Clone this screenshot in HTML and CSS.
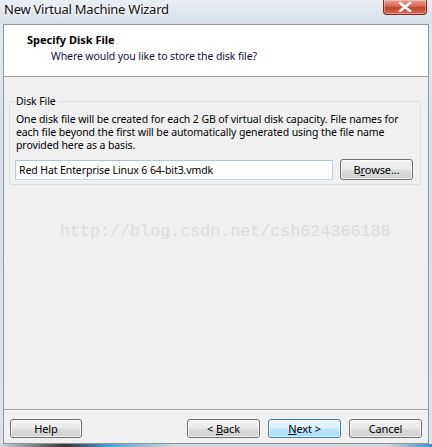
FILE: index.html
```html
<!DOCTYPE html>
<html>
<head>
<meta charset="utf-8">
<link rel="stylesheet" href="styles.css">
</head>
<body>
<div class="window">
  <div class="titlebar">
    <span class="title">New Virtual Machine Wizard</span>
    <div class="close">
      <svg width="14" height="10" viewBox="0 0 14 10"><path d="M2 1 L12 9 M12 1 L2 9" stroke="#fff" stroke-width="2.6" stroke-linecap="square"/></svg>
    </div>
  </div>
  <div class="frame">
    <div class="client">
      <div class="header">
        <div class="h-title">Specify Disk File</div>
        <div class="h-sub">Where would you like to store the disk file?</div>
      </div>
      <div class="body">
        <fieldset class="group">
          <legend>Disk File</legend>
          <p class="desc">One disk file will be created for each 2 GB of virtual disk capacity. File names for each file beyond the first will be automatically generated using the file name provided here as a basis.</p>
          <div class="row">
            <div class="input">Red Hat Enterprise Linux 6 64-bit3.vmdk</div>
            <div class="btn browse">B<u>r</u>owse...</div>
          </div>
        </fieldset>
        <div class="watermark">http://blog.csdn.net/csh624366188</div>
      </div>
      <div class="footer">
        <div class="btn help">Help</div>
        <div class="spacer"></div>
        <div class="btn back">&lt; <u>B</u>ack</div>
        <div class="btn next"><u>N</u>ext &gt;</div>
        <div class="btn cancel">Cancel</div>
      </div>
    </div>
  </div>
  <div class="desk"></div>
</div>
</body>
</html>
```

FILE: styles.css
```css
html, body {
  margin: 0;
  padding: 0;
  width: 432px;
  height: 447px;
  overflow: hidden;
  background: #cfd9e3;
}
.window {
  width: 432px;
  height: 447px;
  display: flex;
  flex-direction: column;
  background: linear-gradient(180deg, #e3eaf1 0%, #d6dfe8 30%, #dbe3eb 100%);
  font-family: "Noto Sans", "Open Sans", sans-serif;
}
.titlebar {
  height: 24px;
  display: flex;
  justify-content: space-between;
  align-items: flex-start;
  box-sizing: border-box;
  padding-left: 4px;
  padding-right: 5px;
  background: linear-gradient(180deg, #e9eef4 0%, #dfe6ee 50%, #d5dee8 100%);
}
.title {
  font-size: 13px;
  line-height: 19px;
  color: #111;
  text-shadow: 0 0 6px #fff, 0 0 3px #fff;
  letter-spacing: -0.25px;
}
.close {
  width: 44px;
  height: 15px;
  box-sizing: border-box;
  border: 1px solid #7c2a20;
  border-top: none;
  border-radius: 0 0 4px 4px;
  background: linear-gradient(180deg, #e8a493 0%, #d9674f 45%, #c2432c 55%, #d96a50 100%);
  display: flex;
  justify-content: center;
  align-items: center;
  box-shadow: inset 0 0 0 1px rgba(255,255,255,0.35);
}
.frame {
  flex: 1;
  display: flex;
  padding: 0 3px 0 3px;
}
.client {
  flex: 1;
  display: flex;
  flex-direction: column;
  border: 1px solid #8e959c;
  background: #f0f0f0;
  font-size: 10.5px;
  letter-spacing: -0.1px;
  color: #000;
}
.header {
  height: 52px;
  background: #fff;
  border-bottom: 1px solid #a0a0a0;
  box-sizing: border-box;
  padding-top: 7px;
}
.h-title {
  font-weight: bold;
  font-size: 11px;
  letter-spacing: 0;
  line-height: 16px;
  padding-left: 23px;
}
.h-sub {
  line-height: 16px;
  padding-left: 47px;
  color: #101040;
}
.body {
  flex: 1;
  position: relative;
  padding: 17px 7px 0 5px;
  border-bottom: 1px solid #a0a0a0;
  box-shadow: 0 1px 0 #fff;
}
.group {
  margin: 0;
  height: 91px;
  box-sizing: border-box;
  border: 1px solid #d5dfe5;
  border-radius: 3px;
  padding: 0 7px 0 6px;
}
.group legend {
  padding: 0 2px 0 1px;
  margin-left: -1px;
  line-height: 14px;
}
.desc {
  margin: 5px 0 0 0;
  line-height: 13px;
}
.row {
  display: flex;
  align-items: center;
  margin-top: 7px;
  gap: 7px;
}
.input {
  flex: 1;
  height: 20px;
  box-sizing: border-box;
  border: 1px solid;
  border-color: #a4c6e0 #b5cfe4 #c0d6ea #b5cfe4;
  background: #fff;
  padding: 0 3px;
  line-height: 18px;
  margin-left: -1px;
}
.btn {
  box-sizing: border-box;
  height: 19px;
  width: 73px;
  border: 1px solid #707070;
  border-radius: 3px;
  background: linear-gradient(180deg, #f2f2f2 0%, #ebebeb 48%, #dddddd 52%, #cfcfcf 100%);
  box-shadow: inset 0 0 0 1px rgba(255,255,255,0.7);
  text-align: center;
  line-height: 17px;
  font-size: 11px;
}
.browse {
  height: 21px;
  line-height: 19px;
}
.footer {
  height: 33px;
  box-sizing: border-box;
  display: flex;
  align-items: flex-start;
  padding: 9px 6px 0 6px;
  gap: 8px;
}
.spacer { flex: 1; }
.help { width: 72px; }
.next {
  border-color: #3c7fb1;
  background: linear-gradient(180deg, #eaf6fd 0%, #d9f0fc 48%, #bee6fd 52%, #a7d9f5 100%);
}
.watermark {
  position: absolute;
  left: 56px;
  top: 145px;
  font-family: "Liberation Mono", monospace;
  font-size: 16.7px;
  color: #dcdcdc;
  letter-spacing: 0;
}
.desk {
  height: 3px;
  background: linear-gradient(90deg, #d0d8e0 0%, #333 15%, #4aa0d8 25%, #d0d8e0 40%, #d0d8e0 90%, #3a90c8 100%);
}
```
